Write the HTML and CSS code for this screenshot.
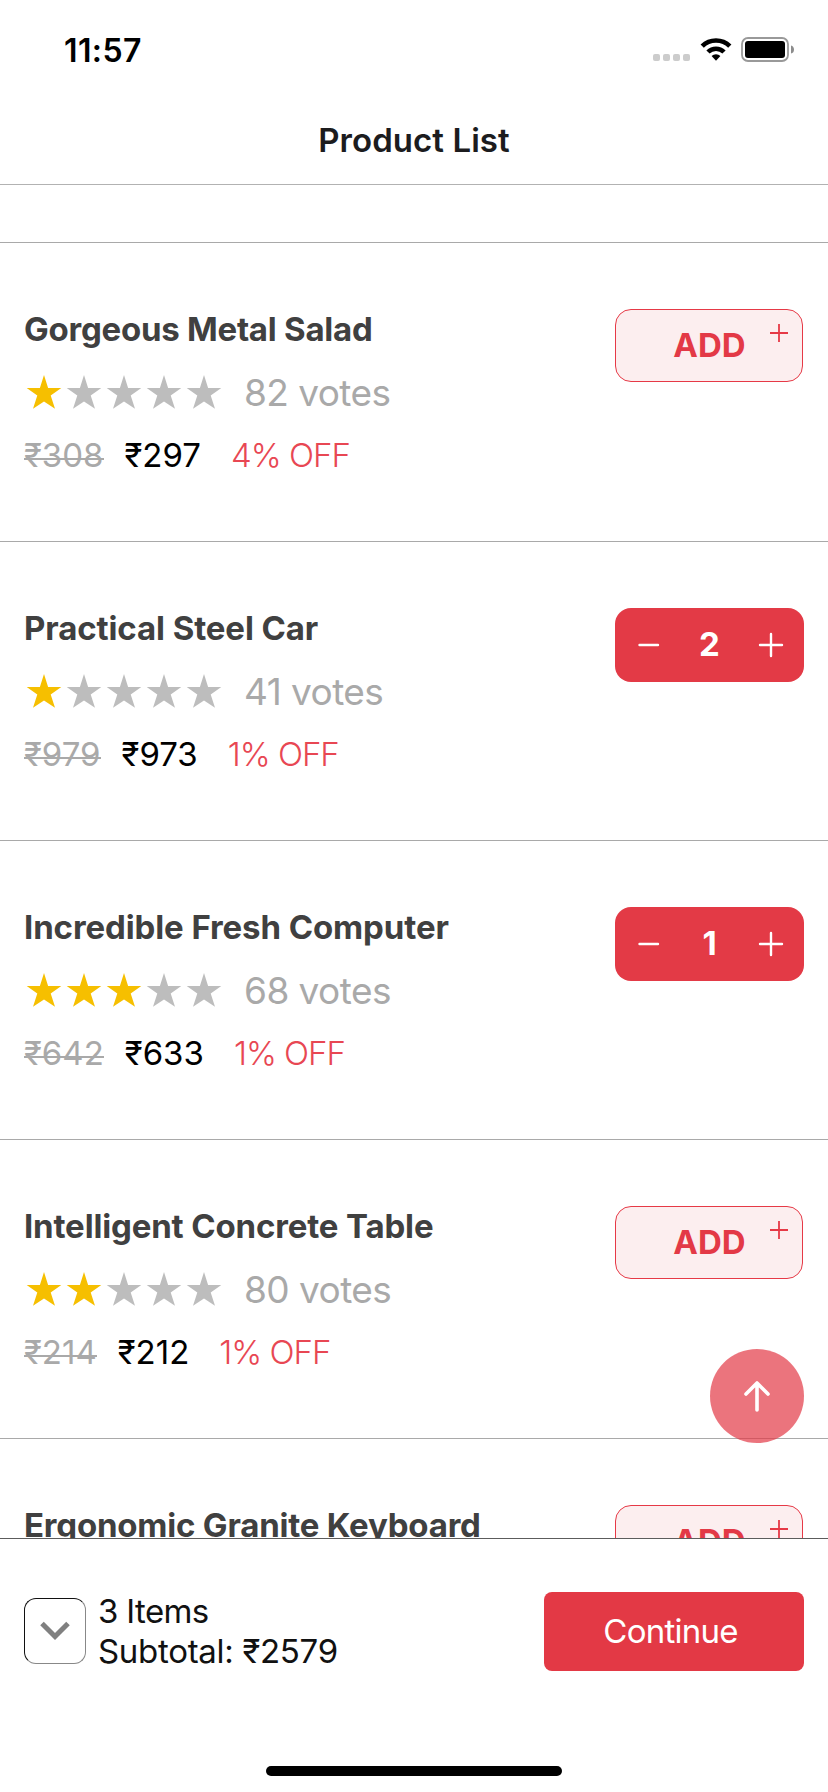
FILE: index.html
```html
<!DOCTYPE html>
<html lang="en">
<head>
<meta charset="utf-8">
<title>Product List</title>
<link rel="stylesheet" href="styles.css">
</head>
<body>
<svg width="0" height="0" class="defs">
  <symbol id="star" viewBox="0 0 40 40"><path d="M20 3l4.1 12.9H37.3L26.7 23.6l4.3 13.2L20 29.4 9 36.8l4.3-13.2L2.7 15.9h13.2z"/></symbol>
</svg>
<div class="screen">
  <header class="status">
    <span class="clock">11:57</span>
    <div class="indicators">
      <div class="dots"><i></i><i></i><i></i><i></i></div>
      <svg class="wifi" viewBox="0 0 32 24"><path d="M2.2 9.2a19.5 19.5 0 0 1 27.6 0" fill="none" stroke="#000" stroke-width="4.6"/><path d="M8 15a11.3 11.3 0 0 1 16 0" fill="none" stroke="#000" stroke-width="4.6"/><path d="M11.6 19a6.2 6.2 0 0 1 8.8 0L16 23.7z"/></svg>
      <svg class="battery" viewBox="0 0 54 26"><rect x="1" y="1" width="46" height="23" rx="6" fill="none" stroke="#999" stroke-width="1.8"/><rect x="4" y="4" width="40" height="17" rx="3"/><path d="M50 8.4c4 1 4 7.200 0 8.200z" fill="#8c8c8c"/></svg>
    </div>
  </header>
  <h1 class="title">Product List</h1>
  <main class="list">
    <div class="spacer"></div>
    <section class="card">
      <div class="info">
        <h2 class="name n1">Gorgeous Metal Salad</h2>
        <div class="rating"><svg class="on"><use href="#star"/></svg><svg><use href="#star"/></svg><svg><use href="#star"/></svg><svg><use href="#star"/></svg><svg><use href="#star"/></svg><span class="votes">82 votes</span></div>
        <div class="prices"><span class="old">₹308</span><span class="now">₹297</span><span class="off">4% OFF</span></div>
      </div>
      <button class="add">ADD<svg class="corner" viewBox="0 0 18 18"><path d="M0 9h18M9 0v18"/></svg></button>
    </section>
    <section class="card">
      <div class="info">
        <h2 class="name n2">Practical Steel Car</h2>
        <div class="rating"><svg class="on"><use href="#star"/></svg><svg><use href="#star"/></svg><svg><use href="#star"/></svg><svg><use href="#star"/></svg><svg><use href="#star"/></svg><span class="votes">41 votes</span></div>
        <div class="prices"><span class="old">₹979</span><span class="now">₹973</span><span class="off">1% OFF</span></div>
      </div>
      <div class="stepper"><svg viewBox="0 0 26 26"><path d="M4.500 13h18.500"/></svg><b>2</b><svg viewBox="0 0 26 26"><path d="M2 13h22M13 2v22"/></svg></div>
    </section>
    <section class="card">
      <div class="info">
        <h2 class="name n3">Incredible Fresh Computer</h2>
        <div class="rating"><svg class="on"><use href="#star"/></svg><svg class="on"><use href="#star"/></svg><svg class="on"><use href="#star"/></svg><svg><use href="#star"/></svg><svg><use href="#star"/></svg><span class="votes">68 votes</span></div>
        <div class="prices"><span class="old">₹642</span><span class="now">₹633</span><span class="off">1% OFF</span></div>
      </div>
      <div class="stepper"><svg viewBox="0 0 26 26"><path d="M4.500 13h18.500"/></svg><b>1</b><svg viewBox="0 0 26 26"><path d="M2 13h22M13 2v22"/></svg></div>
    </section>
    <section class="card">
      <div class="info">
        <h2 class="name n4">Intelligent Concrete Table</h2>
        <div class="rating"><svg class="on"><use href="#star"/></svg><svg class="on"><use href="#star"/></svg><svg><use href="#star"/></svg><svg><use href="#star"/></svg><svg><use href="#star"/></svg><span class="votes">80 votes</span></div>
        <div class="prices"><span class="old">₹214</span><span class="now">₹212</span><span class="off">1% OFF</span></div>
      </div>
      <button class="add">ADD<svg class="corner" viewBox="0 0 18 18"><path d="M0 9h18M9 0v18"/></svg></button>
    </section>
    <section class="card">
      <div class="info">
        <h2 class="name n5">Ergonomic Granite Keyboard</h2>
      </div>
      <button class="add">ADD<svg class="corner" viewBox="0 0 18 18"><path d="M0 9h18M9 0v18"/></svg></button>
    </section>
    <button class="to-top" aria-label="Back to top"><svg viewBox="0 0 30 34"><path d="M15 31V4M4 15L15 4l11 11"/></svg></button>
  </main>
  <footer class="cart">
    <div class="cart-row">
      <button class="expand" aria-label="Expand cart"><svg viewBox="0 0 30 20"><path d="M2 2.500l13 13 13-13"/></svg></button>
      <div class="summary"><span class="items">3 Items</span><span class="subtotal">Subtotal: ₹2579</span></div>
      <button class="continue">Continue</button>
    </div>
    <div class="home-bar"></div>
  </footer>
</div>
</body>
</html>
```
FILE: styles.css
```css
* { box-sizing: border-box; }
body { margin: 0; background: #fff; font-family: Inter, "Liberation Sans", sans-serif; }
button { font-family: inherit; padding: 0; margin: 0; }
svg { display: block; flex: none; }
.defs { position: absolute; }

.screen { width: 828px; height: 1792px; display: flex; flex-direction: column; overflow: hidden; }

.status { height: 96px; flex: none; display: flex; justify-content: space-between; padding: 0 33px 0 64px; }
.clock { margin-top: 31px; font-size: 32px; line-height: 40px; font-weight: 600; letter-spacing: 0.4px; }
.indicators { display: flex; align-items: flex-start; padding-top: 37px; }
.dots { display: flex; gap: 3px; margin-top: 17px; }
.dots i { width: 7px; height: 7px; border-radius: 2px; background: #ccc; }
.wifi { width: 32px; height: 24px; margin-left: 10px; }
.battery { width: 54px; height: 26px; margin-left: 9px; }

.title { height: 89px; flex: none; margin: 0; padding-top: 24px; border-bottom: 1px solid #b2b2b2; text-align: center; font-size: 33px; line-height: 40px; font-weight: 600; color: #1c1c1e; letter-spacing: 0.05px; }

.list { flex: none; height: 1353px; overflow: hidden; position: relative; }
.spacer { height: 58px; border-bottom: 1px solid #a9a9a9; }
.card { height: 299px; border-bottom: 1px solid #a9a9a9; padding: 66px 24px 0; display: flex; justify-content: space-between; align-items: flex-start; }
.info { white-space: nowrap; }
.name { margin: 0; font-size: 33px; line-height: 40px; font-weight: 700; color: #404040; }
.n1 { letter-spacing: -0.25px; }
.n2 { letter-spacing: -0.1px; }
.n3 { letter-spacing: -0.1px; }
.n4 { letter-spacing: -0.15px; }
.n5 { letter-spacing: -0.2px; }
.rating { display: flex; align-items: center; height: 45px; margin-top: 21px; fill: #bdbdbd; }
.rating svg { width: 40px; height: 40px; margin-top: -1px; }
.rating .on { fill: #f6bf00; }
.votes { margin-left: 20px; font-size: 37px; line-height: 45px; color: #a9a9a9; letter-spacing: -0.55px; }
.prices { display: flex; margin-top: 20px; font-size: 33px; line-height: 40px; }
.old { color: #a9a9a9; background: linear-gradient(#a9a9a9, #a9a9a9) 0 23px / 100% 2px no-repeat; }
.now { margin-left: 21px; color: #000; }
.off { margin-left: 30px; color: #e84753; font-weight: 300; letter-spacing: -1px; }

.add { position: relative; width: 188px; height: 73px; margin-right: 1px; border: 1px solid #e63946; border-radius: 16px; background: #fceeef; color: #e33946; font-size: 33px; font-weight: 700; padding: 0 0 2px 1px; }
.corner { position: absolute; top: 14px; right: 14px; width: 18px; height: 18px; fill: none; stroke: #e63946; stroke-width: 1.8; }
.stepper { width: 189px; height: 74px; border-radius: 16px; background: #e33a46; color: #fff; display: flex; align-items: center; justify-content: space-between; padding: 0 20px; font-size: 33px; }
.stepper b { padding-bottom: 2px; }
.stepper svg { width: 26px; height: 26px; margin-top: -1px; fill: none; stroke: #fff; stroke-width: 2.4; stroke-linecap: round; }
.to-top { position: absolute; right: 24px; bottom: 95px; width: 94px; height: 94px; border: 0; border-radius: 50%; background: rgba(227, 57, 70, .7); display: flex; align-items: center; justify-content: center; }
.to-top svg { width: 30px; height: 34px; fill: none; stroke: #fff; stroke-width: 3.600; stroke-linecap: round; stroke-linejoin: round; }

.cart { flex: 1; border-top: 1px solid #5c5c5c; background: #fff; display: flex; flex-direction: column; align-items: center; justify-content: space-between; padding-bottom: 16px; }
.cart-row { width: 100%; display: flex; align-items: center; padding: 52px 24px 0; }
.expand { width: 62px; height: 66px; border: 1px solid #333; border-color: #111 #888 #888 #111; border-radius: 12px; background: #fff; display: flex; align-items: center; justify-content: center; }
.expand svg { width: 30px; height: 20px; fill: none; stroke: #808080; stroke-width: 5; }
.summary { margin-left: 12px; display: flex; flex-direction: column; font-size: 33px; line-height: 40px; color: #111; }
.items { letter-spacing: -0.65px; }
.subtotal { letter-spacing: -0.3px; }
.continue { width: 260px; height: 79px; margin-left: auto; padding-right: 7px; border: 0; border-radius: 8px; background: #e33945; color: #fff; font-size: 33px; letter-spacing: -0.75px; }
.home-bar { width: 296px; height: 10px; border-radius: 5px; background: #000; }
```
